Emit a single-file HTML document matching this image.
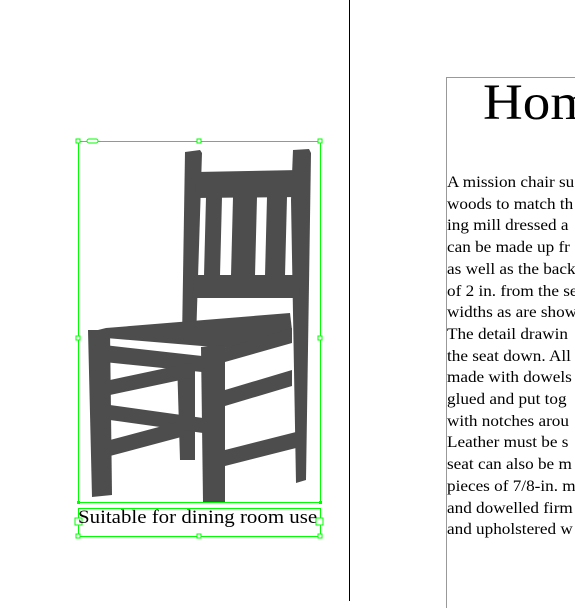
<!DOCTYPE html>
<html><head><style>
body{margin:0;width:575px;height:601px;background:#fff;position:relative;overflow:hidden;font-family:"Liberation Serif",serif}
.vl{position:absolute;left:349px;top:0;width:1px;height:601px;background:#000}
.pg{position:absolute;left:446px;top:77px;width:140px;height:530px;border-left:1px solid #999;border-top:1px solid #999}
h1{position:absolute;left:483px;top:73px;margin:0;font-weight:normal;font-size:51px;white-space:nowrap;line-height:60px;transform-origin:0 0;transform:scaleX(1.08)}
.txt{position:absolute;left:447px;top:172px;font-size:15.6px;line-height:21.7px;white-space:nowrap;transform-origin:0 0;transform:scaleX(1.1)}
.cap{position:absolute;left:78px;top:506px;font-size:19px;line-height:24px;white-space:nowrap;transform-origin:0 0;transform:scaleX(1.1)}
</style></head><body>
<div class="vl"></div>
<div class="pg"></div>
<h1>Hom</h1>
<div class="txt">A mission chair su<br>woods to match th<br>ing mill dressed a<br>can be made up fr<br>as well as the back<br>of 2 in. from the se<br>widths as are show<br>The detail drawin<br>the seat down. All<br>made with dowels<br>glued and put tog<br>with notches arou<br>Leather must be s<br>seat can also be m<br>pieces of 7/8-in. m<br>and dowelled firm<br>and upholstered w</div>
<svg width="575" height="601" style="position:absolute;left:0;top:0">
<g fill="#4d4d4d">
<polygon points="185,152 200,150 202,153 196,340 182,340"/>
<polygon points="293,150 309,149 311,153 306,480 296,483 291,200"/>
<polygon points="196,172 300,170 300,197 195,198"/>
<polygon points="206,197 222,197 220,276 204,276"/>
<polygon points="233,197 257,197 255,276 231,276"/>
<polygon points="267,197 287,197 285,276 265,276"/>
<polygon points="195,275 300,275 299,298 192,298"/>
<polygon points="177,360 195,360 195,460 180,460"/>
<polygon points="90,332 106,328 290,313 292,330 226,348 106,338"/>
<polygon points="88,330 110,330 112,495 92,497"/>
<polygon points="201,347 225,345 225,502 203,502"/>
<polygon points="104,345 202,356 202,372 104,362"/>
<polygon points="225,348 292,328 292,343 225,362"/>
<polygon points="110,380 190,363 190,378 110,395"/>
<polygon points="110,405 203,418 203,433 110,420"/>
<polygon points="110,440 185,420 185,436 110,456"/>
<polygon points="225,390 292,370 292,386 225,406"/>
<polygon points="225,450 296,432 296,448 225,466"/>
</g>
<g fill="none" stroke="#0f0" stroke-width="1">
<rect x="78.5" y="141.5" width="242" height="361"/>
<rect x="78.5" y="508.5" width="242" height="28"/>
<g fill="#fff">
<rect x="76" y="139" width="4" height="4"/><rect x="197" y="139" width="4" height="4"/><rect x="318" y="139" width="4" height="4"/>
<rect x="76" y="336" width="4" height="4"/><rect x="318" y="336" width="4" height="4"/>
<rect x="76" y="534" width="4" height="4"/><rect x="197" y="534" width="4" height="4"/><rect x="318" y="534" width="4" height="4"/>
<rect x="75" y="518" width="7" height="7"/><rect x="316" y="518" width="7" height="7"/>
<rect x="87" y="139" width="11" height="4" rx="2"/>
</g>
</g>
<rect x="77" y="501" width="3" height="3" fill="#0f0"/><rect x="319" y="501" width="3" height="3" fill="#0f0"/>
</svg>
<div class="cap">Suitable for dining room use</div>
</body></html>
